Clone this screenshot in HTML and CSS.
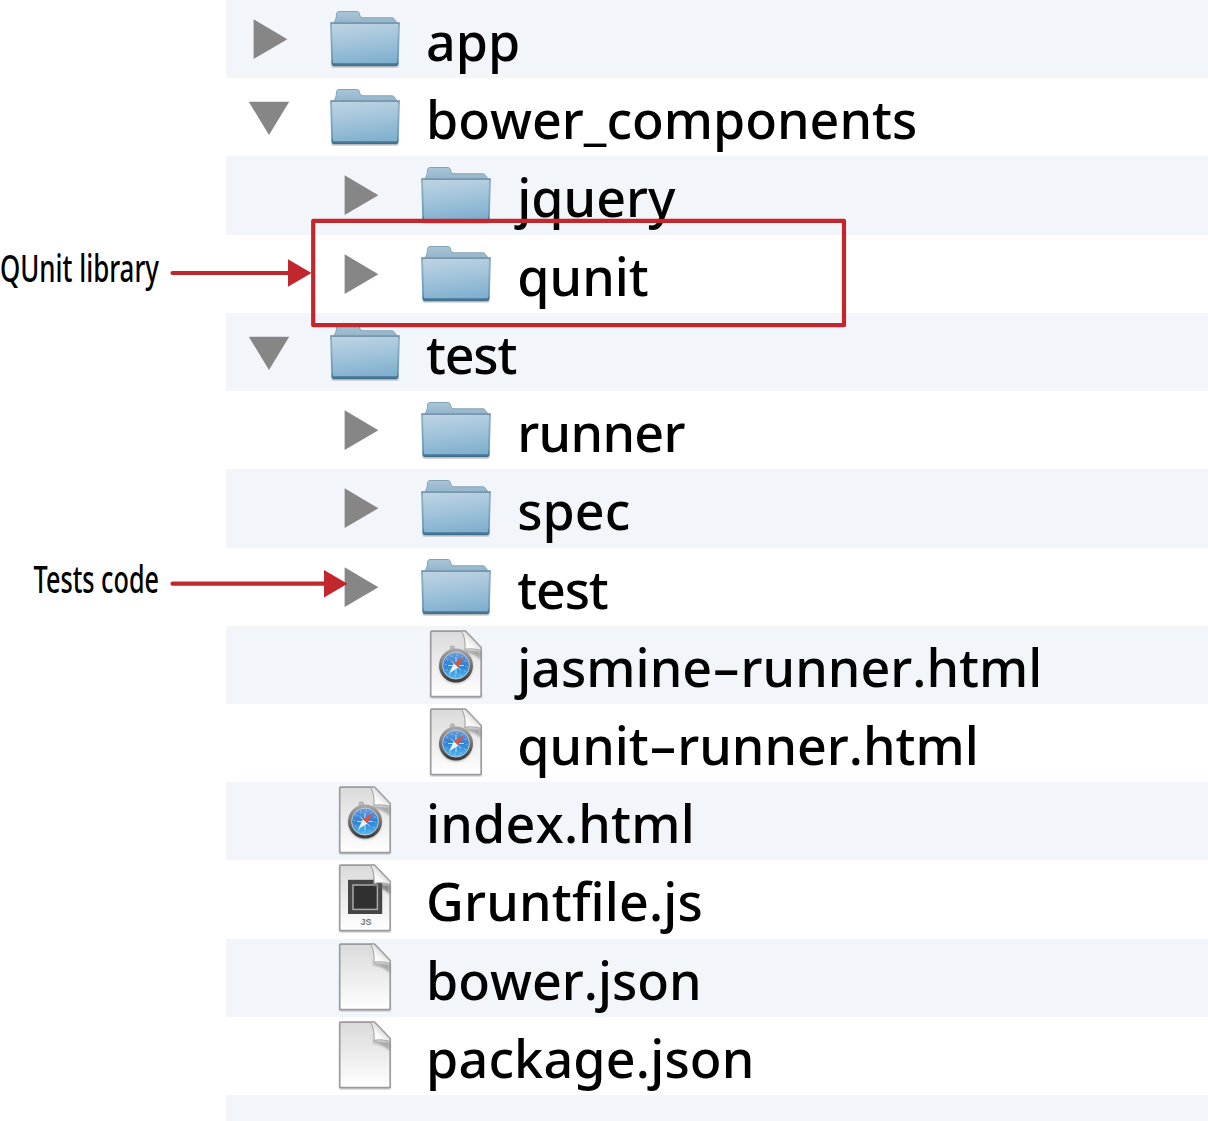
FILE: index.html
```
<!DOCTYPE html>
<html lang="en">
<head>
<meta charset="utf-8">
<title>Project files</title>
<link rel="stylesheet" href="styles.css">
</head>
<body>
<svg class="defs" width="0" height="0" aria-hidden="true">
  <defs>
    <linearGradient id="folderFront" x1="0.2" y1="0" x2="0.4" y2="1"><stop offset="0" stop-color="#bdd3e3"/><stop offset="0.5" stop-color="#a0c3da"/><stop offset="1" stop-color="#80b0cf"/></linearGradient>
    <linearGradient id="folderBack" x1="0" y1="0" x2="0" y2="1"><stop offset="0" stop-color="#a9c6d8"/><stop offset="1" stop-color="#86a9c1"/></linearGradient>
    <linearGradient id="folderEdge" x1="0" y1="0" x2="0" y2="1"><stop offset="0" stop-color="#7e9db3"/><stop offset="0.1" stop-color="#8eafc4"/><stop offset="0.85" stop-color="#6d9ab8"/><stop offset="1" stop-color="#3e6d8d"/></linearGradient>
    <linearGradient id="paper" x1="0" y1="0" x2="0" y2="1"><stop offset="0" stop-color="#dadada"/><stop offset="1" stop-color="#ffffff"/></linearGradient>
    <linearGradient id="curl" x1="0" y1="1" x2="0.6" y2="0.4"><stop offset="0" stop-color="#ffffff"/><stop offset="0.6" stop-color="#fafafa"/><stop offset="1" stop-color="#dddddd"/></linearGradient>
    <linearGradient id="rim" x1="0" y1="0" x2="0" y2="1"><stop offset="0" stop-color="#a5a5a5"/><stop offset="0.5" stop-color="#77716c"/><stop offset="1" stop-color="#3c3c3e"/></linearGradient>
    <linearGradient id="dial" x1="0" y1="0" x2="0" y2="1"><stop offset="0" stop-color="#75a3dd"/><stop offset="0.5" stop-color="#2e7fd2"/><stop offset="1" stop-color="#52c4f5"/></linearGradient>
    <filter id="soft" x="-20%" y="-20%" width="140%" height="140%"><feGaussianBlur stdDeviation="1.1"/></filter>
    <symbol id="closed" viewBox="0 0 60 78"><path d="M14.6 19.3 48.4 39.2 14.6 59Z" fill="#868686"/></symbol>
    <symbol id="open" viewBox="0 0 60 78"><path d="M9.8 23.8H50.2L30 57Z" fill="#868686"/></symbol>
    <symbol id="folder" viewBox="0 0 80 78">
      <path d="M7 64H73V67.3H7Z" fill="#5d666d" opacity=".6" filter="url(#soft)"/>
      <path d="M9 24 10.5 19.5Q11.5 18.5 11.5 13.5Q12 11.5 14 11.5H32Q34 11.5 34.5 14L35 16Q35.5 17.8 38 17.8H67Q69 17.8 69.5 19.5L72.5 23.5V30H9Z" fill="url(#folderBack)" stroke="#83a2b6"/>
      <path d="M6 23.2H74L72.8 63Q72.7 65 71 65H9Q7.3 65 7.2 63Z" fill="url(#folderFront)" stroke="url(#folderEdge)" stroke-width="1.8"/>
      <path d="M6 23.2H74" stroke="#7797ae" stroke-width="1.5"/>
      <path d="M8 64.2H72" stroke="#477793" stroke-width="2"/>
    </symbol>
    <symbol id="fold" viewBox="0 0 80 78">
      <path d="M45 9 47.5 24 64.5 25V34Q60 28 48 26Z" fill="#666" opacity=".5" filter="url(#soft)"/>
      <path d="M45.5 5.3H49.5L65 21.5V24.6Q57 21.8 49 23.4Q49.8 12 45.5 5.3Z" fill="url(#curl)" stroke="#a5a5a5" stroke-width="1.1"/>
    </symbol>
    <symbol id="page" viewBox="0 0 80 78">
      <path d="M14.5 69.5H65.5V72H14.5Z" fill="#777" opacity=".7" filter="url(#soft)"/>
      <path d="M14.7 6.1Q14.7 5.1 15.7 5.1H49.5L65.2 21.5V69.5Q65.2 70.5 64.2 70.5H15.7Q14.7 70.5 14.7 69.5Z" fill="url(#paper)" stroke="#9b9b9f" stroke-width="1.7"/>
      <use href="#fold" width="80" height="78"/>
    </symbol>
    <symbol id="webpage" viewBox="0 0 80 78">
      <use href="#page"/>
      <rect x="34.3" y="20" width="4" height="5" rx="1" fill="#bcbcbc" stroke="#999" stroke-width=".6"/>
      <circle cx="40" cy="41" r="16.6" fill="#777" opacity=".5" filter="url(#soft)"/>
      <circle cx="40" cy="39.5" r="15.4" fill="url(#dial)" stroke="url(#rim)" stroke-width="3.2"/>
      <circle cx="40" cy="39.5" r="13.4" fill="none" stroke="#c4ccd3" stroke-width="1"/>
      <circle cx="40" cy="39.5" r="10.5" fill="none" stroke="#a8d4f5" stroke-width="2.2" stroke-dasharray="1.4 4.1" opacity=".5"/>
      <path d="M35 34.5 45 44.5M40 31V48M32 39.5H48" stroke="#bce0fa" stroke-width="1"/>
      <path d="M37.8 37.2 33 47.5 42.4 41.6Z" fill="#e5f5ff"/><path d="M37.8 37.2 48 31 42.4 41.6Z" fill="#da553a"/>
    </symbol>
    <symbol id="script" viewBox="0 0 80 78">
      <use href="#page"/>
      <rect x="23" y="19.8" width="34.2" height="34.2" fill="#454545"/>
      <rect x="28" y="25" width="24.4" height="24.4" fill="#303030" stroke="#aaa" stroke-width="1.5"/>
      <use href="#fold" width="80" height="78"/>
      <text x="41" y="65.2" class="badge">JS</text>
    </symbol>
  </defs>
</svg>
<main class="figure">
  <ul class="tree">
    <li class="row"><svg class="toggle"><use href="#closed"/></svg><svg class="icon"><use href="#folder"/></svg><span class="name">app</span></li>
    <li class="row"><svg class="toggle"><use href="#open"/></svg><svg class="icon"><use href="#folder"/></svg><span class="name">bower_components</span></li>
    <li class="row nested"><svg class="toggle"><use href="#closed"/></svg><svg class="icon"><use href="#folder"/></svg><span class="name">jquery</span></li>
    <li class="row nested"><svg class="toggle"><use href="#closed"/></svg><svg class="icon"><use href="#folder"/></svg><span class="name">qunit</span></li>
    <li class="row"><svg class="toggle"><use href="#open"/></svg><svg class="icon"><use href="#folder"/></svg><span class="name tight">test</span></li>
    <li class="row nested"><svg class="toggle"><use href="#closed"/></svg><svg class="icon"><use href="#folder"/></svg><span class="name snug">runner</span></li>
    <li class="row nested"><svg class="toggle"><use href="#closed"/></svg><svg class="icon"><use href="#folder"/></svg><span class="name">spec</span></li>
    <li class="row nested"><svg class="toggle"><use href="#closed"/></svg><svg class="icon"><use href="#folder"/></svg><span class="name tight">test</span></li>
    <li class="row nested"><span class="toggle"></span><svg class="icon"><use href="#webpage"/></svg><span class="name">jasmine<span class="dash">–</span>runner.html</span></li>
    <li class="row nested"><span class="toggle"></span><svg class="icon"><use href="#webpage"/></svg><span class="name">qunit<span class="dash">–</span>runner.html</span></li>
    <li class="row"><span class="toggle"></span><svg class="icon"><use href="#webpage"/></svg><span class="name loose">index.html</span></li>
    <li class="row"><span class="toggle"></span><svg class="icon"><use href="#script"/></svg><span class="name loose">Gruntﬁle.js</span></li>
    <li class="row"><span class="toggle"></span><svg class="icon"><use href="#page"/></svg><span class="name">bower.json</span></li>
    <li class="row"><span class="toggle"></span><svg class="icon"><use href="#page"/></svg><span class="name loose">package.json</span></li>
    <li class="row"></li>
  </ul>
  <svg class="callouts" viewBox="0 0 1208 1121">
    <g class="line"><path d="M172.5 273H292M172.5 583.7H328"/><rect x="313.2" y="220.8" width="530.8" height="104.4" stroke-linejoin="round"/></g>
    <path class="head" d="M288 259.3 311.5 273 288 286.7ZM324 570 347.5 583.7 324 597.4Z"/>
    <text x="0" y="282" textLength="159" lengthAdjust="spacingAndGlyphs">QUnit library</text>
    <text x="33.5" y="593" textLength="125.5" lengthAdjust="spacingAndGlyphs">Tests code</text>
  </svg>
</main>
</body>
</html>
```
FILE: styles.css
```
body { margin: 0; background: #fff; color: #000; }
.defs { position: absolute; }
.figure { position: relative; height: 1121px; overflow: hidden; }
.tree { list-style: none; margin: 0 0 0 226px; padding: 0; }
.row { display: flex; align-items: flex-start; box-sizing: border-box; height: 78.23px; padding-left: 13px; }
.row:nth-child(odd) { background: #f2f6fb; }
.nested { padding-left: 104.3px; }
.toggle { flex: none; width: 60px; height: 78px; }
.icon { flex: none; width: 80px; height: 78px; margin-left: 26px; }
.name { margin-left: 21px; font: 500 52px/81.6px "Noto Sans", "Open Sans", sans-serif; font-kerning: none; white-space: nowrap; height: 78px; }
.tight { letter-spacing: -1.2px; }
.snug { letter-spacing: -0.7px; }
.loose { letter-spacing: 0.2px; }
.dash { display: inline-block; width: 28.5px; text-align: center; }
.badge { font: bold 9px "Liberation Sans", sans-serif; fill: #777; text-anchor: middle; }
.callouts { position: absolute; left: 0; top: 0; width: 1208px; height: 1121px; }
.callouts text { font: 500 38px "Noto Sans", "Open Sans", sans-serif; }
.line { fill: none; stroke: #c1272d; stroke-width: 4.2; stroke-linecap: round; }
.head { fill: #c1272d; }
```
